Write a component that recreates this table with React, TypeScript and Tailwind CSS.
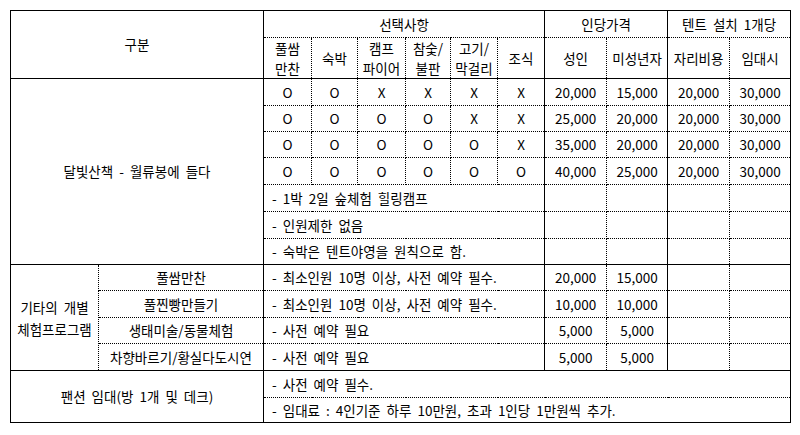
import React from 'react';
import clsx from 'clsx';

type CellProps = {
  children?: React.ReactNode;
  t?: boolean;
  l?: boolean;
  r?: boolean;
  b?: boolean;
  left?: boolean;
  colSpan?: number;
  rowSpan?: number;
  className?: string;
};

// every line is dotted unless a side is asked to be solid (solid wins in collapse)
const Cell: React.FC<CellProps> = ({ children, t, l, r, b, left, colSpan, rowSpan, className }) => (
  <td
    colSpan={colSpan}
    rowSpan={rowSpan}
    className={clsx(
      'border border-dotted border-black p-0 align-middle whitespace-nowrap',
      left ? 'text-left pl-[8px]' : 'text-center',
      t && '[border-top-style:solid]',
      l && '[border-left-style:solid]',
      r && '[border-right-style:solid]',
      b && '[border-bottom-style:solid]',
      className
    )}
  >
    {children}
  </td>
);

const options = [
  { marks: ['O', 'O', 'X', 'X', 'X', 'X'], prices: ['20,000', '15,000', '20,000', '30,000'], h: 'h-[27px]' },
  { marks: ['O', 'O', 'O', 'O', 'X', 'X'], prices: ['25,000', '20,000', '20,000', '30,000'], h: 'h-[26px]' },
  { marks: ['O', 'O', 'O', 'O', 'O', 'X'], prices: ['35,000', '20,000', '20,000', '30,000'], h: 'h-[26px]' },
  { marks: ['O', 'O', 'O', 'O', 'O', 'O'], prices: ['40,000', '25,000', '20,000', '30,000'], h: 'h-[27px]' },
];

const notes = [
  { text: '- 1박 2일 숲체험 힐링캠프', h: 'h-[27px]' },
  { text: '- 인원제한 없음', h: 'h-[27px]' },
  { text: '- 숙박은 텐트야영을 원칙으로 함.', h: 'h-[26px]' },
];

const programs = [
  { name: '풀쌈만찬', note: '- 최소인원 10명 이상, 사전 예약 필수.', adult: '20,000', youth: '15,000', h: 'h-[26px]' },
  { name: '풀찐빵만들기', note: '- 최소인원 10명 이상, 사전 예약 필수.', adult: '10,000', youth: '10,000', h: 'h-[27px]' },
  { name: '생태미술/동물체험', note: '- 사전 예약 필요', adult: '5,000', youth: '5,000', h: 'h-[26px]' },
  { name: '차향바르기/황실다도시연', note: '- 사전 예약 필요', adult: '5,000', youth: '5,000', h: 'h-[27px]' },
];

const App: React.FC = () => {
  return (
    <div className="min-h-[435px] w-[800px] bg-white pt-[10px] pl-[10px] font-['Noto_Sans_CJK_KR',sans-serif] text-[13.5px] text-black [word-spacing:3px]">
      <table className="w-[781px] table-fixed border-collapse">
        <colgroup>
          <col className="w-[88px]" />
          <col className="w-[165px]" />
          <col className="w-[48px]" />
          <col className="w-[46px]" />
          <col className="w-[48px]" />
          <col className="w-[45px]" />
          <col className="w-[47px]" />
          <col className="w-[47px]" />
          <col className="w-[62px]" />
          <col className="w-[61px]" />
          <col className="w-[62px]" />
          <col className="w-[61px]" />
        </colgroup>
        <tbody>
          {/* header */}
          <tr className="h-[27px]">
            <Cell colSpan={2} rowSpan={2} t l r>구분</Cell>
            <Cell colSpan={6} t>선택사항</Cell>
            <Cell colSpan={2} t l>인당가격</Cell>
            <Cell colSpan={2} t l r>텐트 설치 1개당</Cell>
          </tr>
          <tr className="h-[41px] leading-[20px]">
            <Cell>풀쌈<br />만찬</Cell>
            <Cell>숙박</Cell>
            <Cell>캠프<br />파이어</Cell>
            <Cell>참숯/<br />불판</Cell>
            <Cell>고기/<br />막걸리</Cell>
            <Cell>조식</Cell>
            <Cell l>성인</Cell>
            <Cell>미성년자</Cell>
            <Cell l>자리비용</Cell>
            <Cell r>임대시</Cell>
          </tr>

          {/* 달빛산책 options */}
          {options.map((row, i) => (
            <tr key={i} className={row.h}>
              {i === 0 && (
                <Cell colSpan={2} rowSpan={7} t l r>달빛산책 - 월류봉에 들다</Cell>
              )}
              {row.marks.map((m, j) => (
                <Cell key={j} t={i === 0}>{m}</Cell>
              ))}
              <Cell t={i === 0} l>{row.prices[0]}</Cell>
              <Cell t={i === 0}>{row.prices[1]}</Cell>
              <Cell t={i === 0} l>{row.prices[2]}</Cell>
              <Cell t={i === 0} r>{row.prices[3]}</Cell>
            </tr>
          ))}
          {notes.map((n, i) => (
            <tr key={i} className={n.h}>
              <Cell colSpan={6} left>{n.text}</Cell>
              <Cell l />
              <Cell />
              <Cell l />
              <Cell r />
            </tr>
          ))}

          {/* 기타 프로그램 */}
          {programs.map((p, i) => (
            <tr key={i} className={p.h}>
              {i === 0 && (
                <Cell rowSpan={4} t l className="leading-[22px]">기타의 개별<br />체험프로그램</Cell>
              )}
              <Cell t={i === 0} r>{p.name}</Cell>
              <Cell colSpan={6} t={i === 0} left>{p.note}</Cell>
              <Cell t={i === 0} l>{p.adult}</Cell>
              <Cell t={i === 0}>{p.youth}</Cell>
              <Cell t={i === 0} l />
              <Cell t={i === 0} r />
            </tr>
          ))}

          {/* 팬션 */}
          <tr className="h-[27px]">
            <Cell colSpan={2} rowSpan={2} t l r b>팬션 임대(방 1개 및 데크)</Cell>
            <Cell colSpan={10} t r left>- 사전 예약 필수.</Cell>
          </tr>
          <tr className="h-[25px]">
            <Cell colSpan={10} r b left>- 임대료 : 4인기준 하루 10만원, 초과 1인당 1만원씩 추가.</Cell>
          </tr>
        </tbody>
      </table>
    </div>
  );
};

export default App;
